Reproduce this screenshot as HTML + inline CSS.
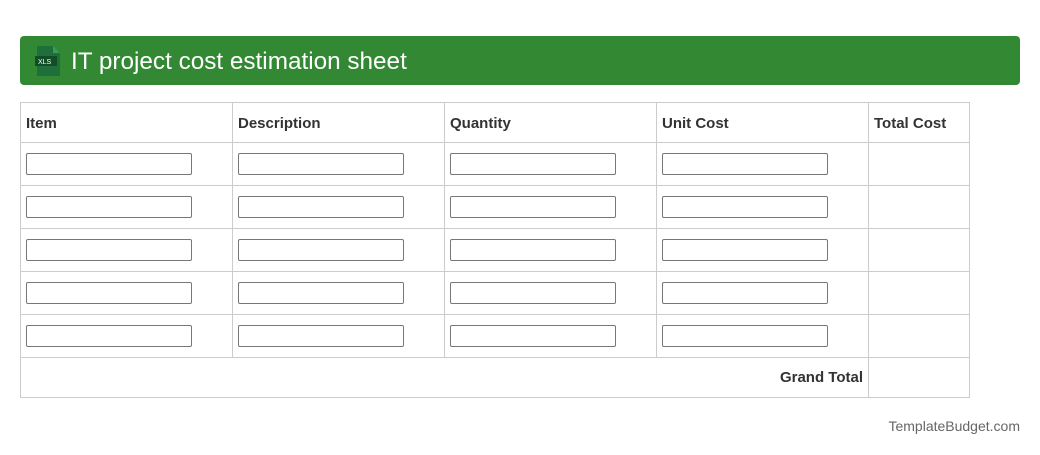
<!DOCTYPE html>
<html><head><style>
body{margin:0;background:#fff;font-family:"Liberation Sans",Arial,sans-serif;width:1040px;height:455px;position:relative;overflow:hidden}
.hdr{position:absolute;left:20px;top:36px;width:1000px;height:49px;background:#338833;border-radius:4px}
.hdr span{position:absolute;left:51px;top:12px;color:#fff;font-size:24.3px}
.ic{position:absolute;left:15px;top:10px}
table{position:absolute;left:20px;top:102px;border-collapse:collapse}
td{border:1px solid #ccc;padding:0 5px;font-size:15px;font-weight:bold;color:#333;box-sizing:border-box}
tr.h td{height:40px;padding-top:1px}
tr.r td{height:43px}
tr.g td{height:40px}
.in{width:166px;height:22px;border:1px solid #777;border-radius:2px;box-sizing:border-box}
.ft{position:absolute;right:20px;top:418px;font-size:14px;color:#666}
</style></head><body>
<div class="hdr">
<svg class="ic" width="26" height="30" viewBox="0 0 26 30"><path d="M2 0h16l7 7v23H2z" fill="#1f6f3a"/><path d="M18 0v7h7z" fill="#3c9a5c"/><rect x="0" y="10" width="22" height="10" fill="#124d28"/><text x="3" y="18" font-size="7" fill="#fff" font-family="Liberation Sans">XLS</text></svg>
<span>IT project cost estimation sheet</span></div>
<table>
<colgroup><col style="width:212px"><col style="width:212px"><col style="width:212px"><col style="width:212px"><col style="width:101px"></colgroup>
<tr class="h"><td>Item</td><td>Description</td><td>Quantity</td><td>Unit Cost</td><td>Total Cost</td></tr>
<tr class="r"><td><div class="in"></div></td><td><div class="in"></div></td><td><div class="in"></div></td><td><div class="in"></div></td><td></td></tr>
<tr class="r"><td><div class="in"></div></td><td><div class="in"></div></td><td><div class="in"></div></td><td><div class="in"></div></td><td></td></tr>
<tr class="r"><td><div class="in"></div></td><td><div class="in"></div></td><td><div class="in"></div></td><td><div class="in"></div></td><td></td></tr>
<tr class="r"><td><div class="in"></div></td><td><div class="in"></div></td><td><div class="in"></div></td><td><div class="in"></div></td><td></td></tr>
<tr class="r"><td><div class="in"></div></td><td><div class="in"></div></td><td><div class="in"></div></td><td><div class="in"></div></td><td></td></tr>
<tr class="g"><td colspan="4" style="text-align:right">Grand Total</td><td></td></tr>
</table>
<div class="ft">TemplateBudget.com</div>
</body></html>
